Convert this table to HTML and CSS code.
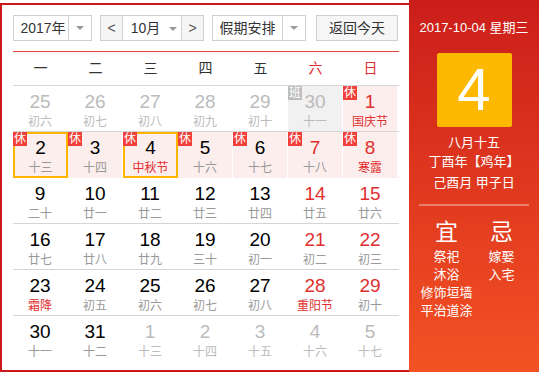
FILE: index.html
```html
<!DOCTYPE html>
<html lang="zh">
<head>
<meta charset="utf-8">
<link rel="stylesheet" href="styles.css">
</head>
<body>
<div class="cal">
  <div class="main">
    <div class="toolbar">
      <div class="sel sel-year"><span class="val">2017年</span><span class="arr"><i class="tri"></i></span></div>
      <div class="sel sel-month">
        <span class="nav">&lt;</span>
        <span class="val">10月<i class="tri tri-in"></i></span>
        <span class="nav">&gt;</span>
      </div>
      <div class="sel sel-hol"><span class="val">假期安排</span><span class="arr"><i class="tri"></i></span></div>
      <div class="btn">返回今天</div>
    </div>
    <div class="week">
      <span>一</span><span>二</span><span>三</span><span>四</span><span>五</span><span class="we">六</span><span class="we">日</span>
    </div>
    <div class="row">
      <div class="cell other"><b>25</b><em>初六</em></div>
      <div class="cell other"><b>26</b><em>初七</em></div>
      <div class="cell other"><b>27</b><em>初八</em></div>
      <div class="cell other"><b>28</b><em>初九</em></div>
      <div class="cell other"><b>29</b><em>初十</em></div>
      <div class="cell other work"><i class="badge ban">班</i><b>30</b><em>十一</em></div>
      <div class="cell hol red"><i class="badge">休</i><b>1</b><em class="fest">国庆节</em></div>
    </div>
    <div class="row">
      <div class="cell hol pick"><i class="badge">休</i><b>2</b><em>十三</em></div>
      <div class="cell hol"><i class="badge">休</i><b>3</b><em>十四</em></div>
      <div class="cell hol pick"><i class="badge">休</i><b>4</b><em class="fest">中秋节</em></div>
      <div class="cell hol"><i class="badge">休</i><b>5</b><em>十六</em></div>
      <div class="cell hol"><i class="badge">休</i><b>6</b><em>十七</em></div>
      <div class="cell hol red"><i class="badge">休</i><b>7</b><em>十八</em></div>
      <div class="cell hol red"><i class="badge">休</i><b>8</b><em class="fest">寒露</em></div>
    </div>
    <div class="row">
      <div class="cell"><b>9</b><em>二十</em></div>
      <div class="cell"><b>10</b><em>廿一</em></div>
      <div class="cell"><b>11</b><em>廿二</em></div>
      <div class="cell"><b>12</b><em>廿三</em></div>
      <div class="cell"><b>13</b><em>廿四</em></div>
      <div class="cell red"><b>14</b><em>廿五</em></div>
      <div class="cell red"><b>15</b><em>廿六</em></div>
    </div>
    <div class="row">
      <div class="cell"><b>16</b><em>廿七</em></div>
      <div class="cell"><b>17</b><em>廿八</em></div>
      <div class="cell"><b>18</b><em>廿九</em></div>
      <div class="cell"><b>19</b><em>三十</em></div>
      <div class="cell"><b>20</b><em>初一</em></div>
      <div class="cell red"><b>21</b><em>初二</em></div>
      <div class="cell red"><b>22</b><em>初三</em></div>
    </div>
    <div class="row">
      <div class="cell"><b>23</b><em class="fest">霜降</em></div>
      <div class="cell"><b>24</b><em>初五</em></div>
      <div class="cell"><b>25</b><em>初六</em></div>
      <div class="cell"><b>26</b><em>初七</em></div>
      <div class="cell"><b>27</b><em>初八</em></div>
      <div class="cell red"><b>28</b><em class="fest">重阳节</em></div>
      <div class="cell red"><b>29</b><em>初十</em></div>
    </div>
    <div class="row last">
      <div class="cell"><b>30</b><em>十一</em></div>
      <div class="cell"><b>31</b><em>十二</em></div>
      <div class="cell other"><b>1</b><em>十三</em></div>
      <div class="cell other"><b>2</b><em>十四</em></div>
      <div class="cell other"><b>3</b><em>十五</em></div>
      <div class="cell other"><b>4</b><em>十六</em></div>
      <div class="cell other"><b>5</b><em>十七</em></div>
    </div>
  </div>
  <div class="side">
    <div class="date">2017-10-04 星期三</div>
    <div class="big">4</div>
    <div class="lunar">
      <div>八月十五</div>
      <div>丁酉年【鸡年】</div>
      <div>己酉月 甲子日</div>
    </div>
    <div class="sep"></div>
    <div class="yiji">
      <div class="col">
        <div class="hd">宜</div>
        <div>祭祀</div><div>沐浴</div><div>修饰垣墙</div><div>平治道涂</div>
      </div>
      <div class="col">
        <div class="hd">忌</div>
        <div>嫁娶</div><div>入宅</div>
      </div>
    </div>
  </div>
</div>
</body>
</html>
```

FILE: styles.css
```css
* { box-sizing: border-box; }
html, body { margin: 0; padding: 0; background: #fff; }
body {
  font-family: "Liberation Sans", Arial, "Noto Sans CJK SC", sans-serif;
  color: #333;
}
.cal {
  margin-top: 3px;
  width: 539px;
  height: 369px;
  display: flex;
  border-top: 2px solid #c9191b;
  border-left: 2px solid #c9191b;
  border-bottom: 2px solid #c9191b;
}
.main {
  width: 407px;
  padding: 10px 10px 0 11px;
  background: #fff;
}
.toolbar {
  display: flex;
  height: 26px;
  font-size: 14px;
  color: #333;
}
.sel, .btn {
  display: flex;
  align-items: stretch;
  border: 1px solid #d0d0d0;
  height: 26px;
  line-height: 24px;
}
.sel-year { width: 79px; }
.sel-month { width: 104px; margin-left: 8px; }
.sel-hol { width: 94px; margin-left: 8px; }
.btn {
  width: 82px;
  margin-left: 10px;
  justify-content: center;
  background: #f6f6f6;
}
.val { flex: 1; text-align: center; }
.sel-year .val { padding-left: 4px; }
.arr {
  width: 23px;
  border-left: 1px solid #d0d0d0;
  display: flex;
  align-items: center;
  justify-content: center;
}
.tri {
  display: inline-block;
  width: 0; height: 0;
  border-left: 4px solid transparent;
  border-right: 4px solid transparent;
  border-top: 4px solid #9a9a9a;
}
.tri-in { margin-left: 9px; vertical-align: 2px; }
.nav {
  width: 22px;
  background: #f5f5f5;
  text-align: center;
  color: #555;
  font-size: 14px;
}
.sel-month .nav:first-child { border-right: 1px solid #d0d0d0; }
.sel-month .nav:last-child { border-left: 1px solid #d0d0d0; }
.sel-month .val { padding-left: 4px; }

.week {
  margin-top: 10px;
  border-top: 1px solid #e3413c;
  border-bottom: 1px solid #d5d5d5;
  height: 35px;
  display: grid;
  grid-template-columns: repeat(7, 55px);
  font-size: 14px;
  line-height: 32px;
  color: #333;
  text-align: center;
}
.week .we { color: #e02f2f; }

.row {
  display: grid;
  grid-template-columns: repeat(7, 55px);
  height: 46px;
  border-bottom: 1px solid #d5d5d5;
}
.row.last { border-bottom: none; }
.cell {
  position: relative;
  border-right: 1px solid #fff;
  text-align: center;
  padding-top: 6px;
}
.cell b {
  display: block;
  font-weight: normal;
  font-size: 19px;
  line-height: 20px;
  color: #000;
}
.cell em {
  display: block;
  font-style: normal;
  font-size: 12px;
  line-height: 16px;
  margin-top: 2px;
  color: #999;
}
.cell.red b { color: #e02f2f; }
.cell em.fest { color: #e02f2f; }
.cell.other b { color: #bbb; }
.cell.other em { color: #bbb; }
.cell.hol { background: #fdeeee; }
.cell.work { background: #f1f1f1; }
.cell.pick {
  border: 2px solid #ffb400;
  padding-top: 4px;
}
.cell.pick .badge { left: -2px; top: -2px; }
.badge {
  position: absolute;
  left: 0; top: 0;
  width: 14px; height: 14px;
  background: #f23f3a;
  color: #fff;
  font-style: normal;
  font-size: 12px;
  line-height: 14px;
  text-align: center;
}
.badge.ban { background: #bdbdbd; }

.side {
  width: 130px;
  margin-top: -5px;
  margin-bottom: -2px;
  background: linear-gradient(to bottom, #cb1e1a 0%, #f35224 100%);
  color: #fff;
  text-align: center;
  padding-top: 19px;
}
.date { font-size: 13px; line-height: 18px; }
.big {
  width: 75px;
  height: 74px;
  margin: 16px auto 0;
  background: #fdb900;
  border-radius: 2px;
  font-size: 60px;
  line-height: 74px;
}
.lunar { margin-top: 6px; font-size: 13px; line-height: 19px; }
.lunar div:last-child { margin-top: 2px; }
.sep {
  width: 110px;
  height: 2px;
  margin: 12px auto 0;
  background: rgba(255,255,255,0.35);
}
.yiji {
  display: flex;
  justify-content: center;
  margin-top: 12px;
  font-size: 13px;
  line-height: 18px;
}
.col { width: 55px; }
.hd { font-size: 23px; line-height: 28px; margin-bottom: 2px; }
```
